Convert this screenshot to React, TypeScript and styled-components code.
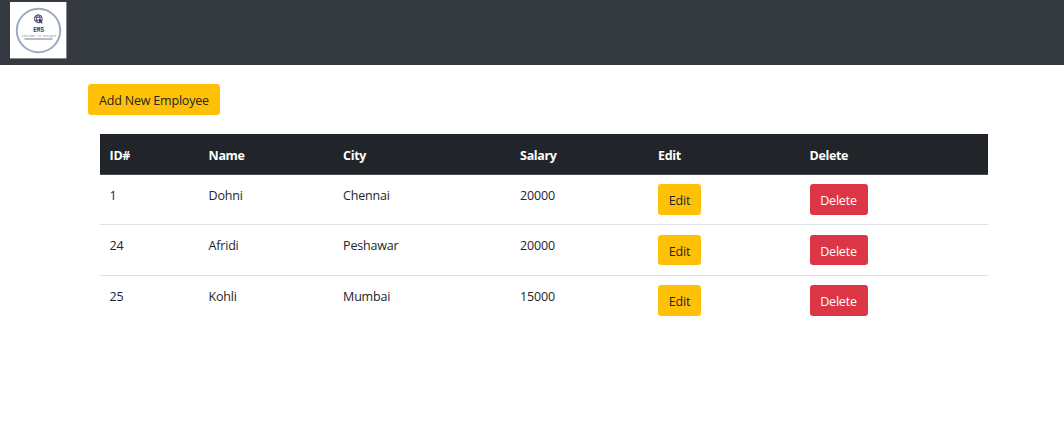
import React from "react";
import styled, { createGlobalStyle } from "styled-components";

const GlobalStyle = createGlobalStyle`
  *, *::before, *::after { box-sizing: border-box; }
  body {
    margin: 0;
    background: #fff;
    color: #212529;
    font-family: "Segoe UI", "Open Sans", "Noto Sans", sans-serif;
    font-size: 12.5px;
    letter-spacing: -0.2px;
    line-height: 19px;
  }
`;

const Navbar = styled.nav`
  display: flex;
  align-items: flex-start;
  height: 65px;
  padding: 2px 10px;
  background: #343a40;
`;

const Logo = styled.svg`
  display: block;
  width: 57px;
  height: 57px;
`;

const Container = styled.main`
  width: 912px;
  margin-left: 88px;
  padding-top: 19.2px;
`;

const tones = {
  warning: { background: "#ffc107", color: "#212529" },
  danger: { background: "#dc3545", color: "#fff" },
};

const Button = styled.button<{ $tone: keyof typeof tones; $width: number }>`
  display: flex;
  align-items: flex-start;
  justify-content: center;
  width: ${(p) => p.$width}px;
  height: 30.4px;
  padding: 7px 0 0;
  border: 0;
  border-radius: 3.2px;
  background: ${(p) => tones[p.$tone].background};
  color: ${(p) => tones[p.$tone].color};
  font: inherit;
  letter-spacing: inherit;
  white-space: nowrap;
  cursor: pointer;
`;

const Table = styled.table`
  width: 888px;
  margin: 19.4px 0 0 12px;
  border-collapse: separate;
  border-spacing: 0;
  table-layout: fixed;
`;

const HeadCell = styled.th<{ $width: number }>`
  width: ${(p) => p.$width}px;
  height: 41px;
  padding: 12px 9.6px 8px;
  border-bottom: 1px solid #454d55;
  background: #212529;
  color: #fff;
  font-weight: 700;
  letter-spacing: -0.35px;
  text-align: left;
  vertical-align: top;
`;

const Row = styled.tr`
  height: 49px;
  & + & { height: 51px; }
  & + & > td { border-top: 1px solid #dee2e6; }
`;

const Cell = styled.td`
  padding: 11px 9.6px 0;
  vertical-align: top;
`;

const ActionCell = styled.td<{ $top: number }>`
  padding: ${(p) => p.$top}px 9.5px 0;
  vertical-align: top;
`;

const columns = [
  { label: "ID#", width: 99 },
  { label: "Name", width: 134.5 },
  { label: "City", width: 177 },
  { label: "Salary", width: 138 },
  { label: "Edit", width: 151.5 },
  { label: "Delete", width: 188 },
];

const employees = [
  { id: 1, name: "Dohni", city: "Chennai", salary: 20000, actionTop: 9.4 },
  { id: 24, name: "Afridi", city: "Peshawar", salary: 20000, actionTop: 9.8 },
  { id: 25, name: "Kohli", city: "Mumbai", salary: 15000, actionTop: 9.2 },
];

function BrandLogo() {
  return (
    <Logo viewBox="0 0 57 57" role="img" aria-label="EMS">
      <rect width="56.4" height="56.4" fill="#fff" />
      <circle cx="28.5" cy="28.5" r="21.7" fill="none" stroke="#9ba9c3" strokeWidth="2" />
      <g fill="none" stroke="#3b3962" strokeWidth="0.9">
        <circle cx="28.3" cy="16.7" r="3.9" />
        <ellipse cx="28.3" cy="16.7" rx="1.7" ry="3.9" />
        <path d="M24.6 15.2h7.4M24.6 18.2h7.4" />
      </g>
      <path d="M28.6 17l4.4 1.6-1.7.9 1.5 1.5-.9.8-1.5-1.5-.7 1.5z" fill="#3b3962" />
      <text x="23.2" y="29.8" fill="#3b3962" fontFamily="Liberation Mono, monospace" fontWeight="700" fontSize="7" letterSpacing="0" textLength="10.8" lengthAdjust="spacingAndGlyphs">EMS</text>
      <text x="11.6" y="34.7" fill="#8b8ba3" fontFamily="Liberation Mono, monospace" fontSize="3.4" letterSpacing="0" textLength="34" lengthAdjust="spacingAndGlyphs">Consider IT Managed</text>
      <path d="M14.5 37h28" stroke="#8e8e9f" strokeWidth="1.2" />
    </Logo>
  );
}

export default function App() {
  return (
    <>
      <GlobalStyle />
      <Navbar>
        <BrandLogo />
      </Navbar>
      <Container>
        <Button $tone="warning" $width={132}>Add New Employee</Button>
        <Table>
          <thead>
            <tr>
              {columns.map((c) => (
                <HeadCell key={c.label} $width={c.width}>{c.label}</HeadCell>
              ))}
            </tr>
          </thead>
          <tbody>
            {employees.map((e) => (
              <Row key={e.id}>
                <Cell>{e.id}</Cell>
                <Cell>{e.name}</Cell>
                <Cell>{e.city}</Cell>
                <Cell>{e.salary}</Cell>
                <ActionCell $top={e.actionTop}><Button $tone="warning" $width={43}>Edit</Button></ActionCell>
                <ActionCell $top={e.actionTop}><Button $tone="danger" $width={58}>Delete</Button></ActionCell>
              </Row>
            ))}
          </tbody>
        </Table>
      </Container>
    </>
  );
}
